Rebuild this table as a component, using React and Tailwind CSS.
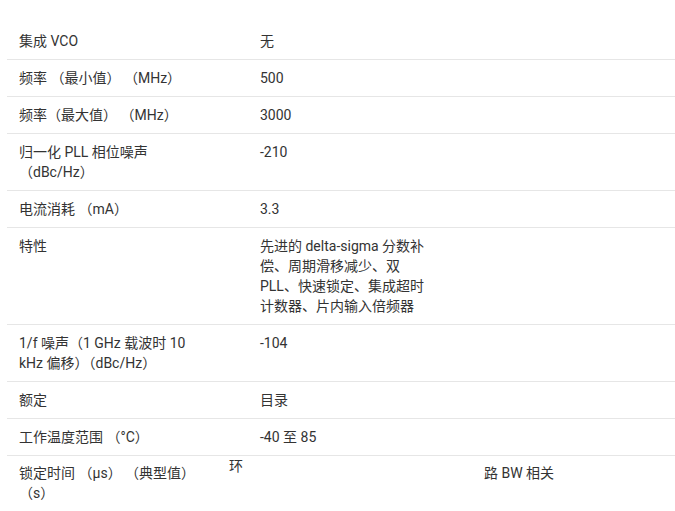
const rows = [
  { label: ["集成 VCO"], value: ["无"] },
  { label: ["频率 （最小值） （MHz）"], value: ["500"] },
  { label: ["频率（最大值） （MHz）"], value: ["3000"] },
  { label: ["归一化 PLL 相位噪声", "（dBc/Hz）"], value: ["-210"] },
  { label: ["电流消耗 （mA）"], value: ["3.3"] },
  {
    label: ["特性"],
    value: [
      "先进的 delta-sigma 分数补",
      "偿、周期滑移减少、双",
      "PLL、快速锁定、集成超时",
      "计数器、片内输入倍频器",
    ],
  },
  { label: ["1/f 噪声（1 GHz 载波时 10", "kHz 偏移）（dBc/Hz）"], value: ["-104"] },
  { label: ["额定"], value: ["目录"] },
  { label: ["工作温度范围 （°C）"], value: ["-40 至 85"] },
];

export default function App() {
  return (
    <div
      className="w-[675px] h-[511px] overflow-hidden bg-white pt-[23px] text-[14px] leading-[20px] text-[#333333]"
      style={{ fontFamily: 'Roboto, "Noto Sans CJK SC", sans-serif' }}
    >
      <div className="ml-[7px]">
        {rows.map((r) => (
          <div key={r.label[0]} className="flex border-b border-[#e6e6e6]">
            <div className="w-[253px] shrink-0 pl-[12px] py-[8px]">
              {r.label.map((l) => (
                <div key={l} className="whitespace-nowrap">{l}</div>
              ))}
            </div>
            <div className="w-[200px] py-[8px]">
              {r.value.map((v) => (
                <div key={v} className="whitespace-nowrap">{v}</div>
              ))}
            </div>
          </div>
        ))}
        <div className="flex">
          <div className="w-[222px] shrink-0 pl-[12px] pt-[7px] pb-[7px]">
            <div>锁定时间 （μs） （典型值）</div>
            <div>（s）</div>
          </div>
          <div className="w-[255px] shrink-0">环</div>
          <div className="pt-[7px]">路 BW 相关</div>
        </div>
      </div>
    </div>
  );
}
